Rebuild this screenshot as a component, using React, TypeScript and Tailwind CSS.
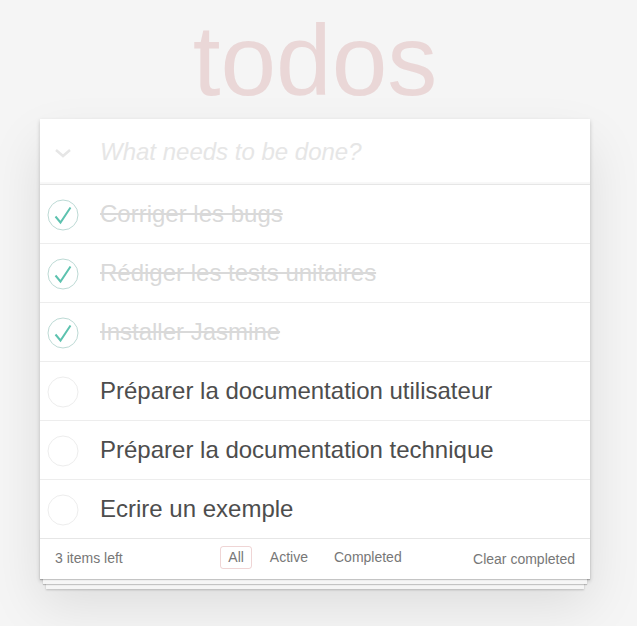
import { useState } from 'react';

type Todo = { id: number; title: string; done: boolean };

const initial: Todo[] = [
  { id: 1, title: 'Corriger les bugs', done: true },
  { id: 2, title: 'Rédiger les tests unitaires', done: true },
  { id: 3, title: 'Installer Jasmine', done: true },
  { id: 4, title: 'Préparer la documentation utilisateur', done: false },
  { id: 5, title: 'Préparer la documentation technique', done: false },
  { id: 6, title: 'Ecrire un exemple', done: false },
];

function Toggle({ done }: { done: boolean }) {
  return (
    <svg width="32" height="32" viewBox="0 0 32 32" className="shrink-0">
      <circle cx="16" cy="16" r="15" fill="none" stroke={done ? '#bddad5' : '#ededed'} strokeWidth="1" />
      {done && (
        <polyline points="8.5,17.5 13.5,23.5 23.5,8.5" fill="none" stroke="#5dc2af" strokeWidth="2" />
      )}
    </svg>
  );
}

export default function App() {
  const [todos, setTodos] = useState(initial);
  const left = todos.filter(t => !t.done).length;

  const toggle = (id: number) =>
    setTodos(todos.map(t => (t.id === id ? { ...t, done: !t.done } : t)));

  return (
    <div className="min-h-[626px] bg-[#f5f5f5] font-['Liberation_Sans',Helvetica,Arial,sans-serif] text-[#4d4d4d]">
      <div className="w-[550px] ml-10">
        <h1 className="h-[119px] pt-[10px] text-center text-[100px] leading-[100px] font-thin text-[rgba(175,47,47,0.15)]">
          todos
        </h1>

        <section className="relative bg-white shadow-[0_2px_4px_0_rgba(0,0,0,0.2),0_25px_50px_0_rgba(0,0,0,0.1)]">
          {/* header input */}
          <div className="relative h-[65px] flex items-center shadow-[inset_0_-2px_1px_rgba(0,0,0,0.03)]">
            <div className="w-[60px] flex justify-center items-center">
              <svg width="18" height="10" viewBox="0 0 18 10" className="ml-[-14px] mt-[2px]">
                <polyline points="2,2 9,8 16,2" fill="none" stroke="#e6e6e6" strokeWidth="2.5" />
              </svg>
            </div>
            <input
              placeholder="What needs to be done?"
              className="flex-1 h-full pr-4 bg-transparent text-[24px] text-[#4d4d4d] outline-none placeholder:italic placeholder:text-[#e6e6e6] placeholder:font-light"
            />
          </div>

          {/* list */}
          <ul className="border-t border-[#e6e6e6]">
            {todos.map((t, i) => {
              const last = i === todos.length - 1;
              return (
                <li
                  key={t.id}
                  className={`flex items-center ${last ? 'h-[58px]' : 'h-[59px] border-b border-[#ededed]'}`}
                >
                  <button onClick={() => toggle(t.id)} className="w-[60px] h-[58px] flex items-center pl-[7px] pt-[1px]">
                    <Toggle done={t.done} />
                  </button>
                  <label
                    className={`text-[24px] leading-[28.8px] ${t.done ? 'text-[#d9d9d9] line-through' : 'text-[#4d4d4d]'}`}
                  >
                    {t.title}
                  </label>
                </li>
              );
            })}
          </ul>

          {/* footer */}
          <footer className="relative h-[41px] border-t border-[#e6e6e6] px-[15px] flex items-center text-[14px] text-[#777]">
            <div className="absolute left-0 right-0 bottom-0 h-[50px] overflow-hidden shadow-[0_1px_1px_rgba(0,0,0,0.2),0_8px_0_-3px_#f6f6f6,0_9px_1px_-3px_rgba(0,0,0,0.2),0_16px_0_-6px_#f6f6f6,0_17px_2px_-6px_rgba(0,0,0,0.2)]" />
            <span className="relative mt-[-2px]">{left} items left</span>
            <ul className="absolute left-0 right-0 top-[7px] flex justify-center gap-[4px]">
              {['All', 'Active', 'Completed'].map((f, i) => (
                <li key={f}>
                  <a
                    className={`block mx-[3px] px-[7px] py-[3px] leading-[15px] rounded-[3px] border ${i === 0 ? 'border-[rgba(175,47,47,0.2)]' : 'border-transparent'}`}
                  >
                    {f}
                  </a>
                </li>
              ))}
            </ul>
            <button className="relative ml-auto text-[#777]">Clear completed</button>
          </footer>
        </section>
      </div>
    </div>
  );
}
